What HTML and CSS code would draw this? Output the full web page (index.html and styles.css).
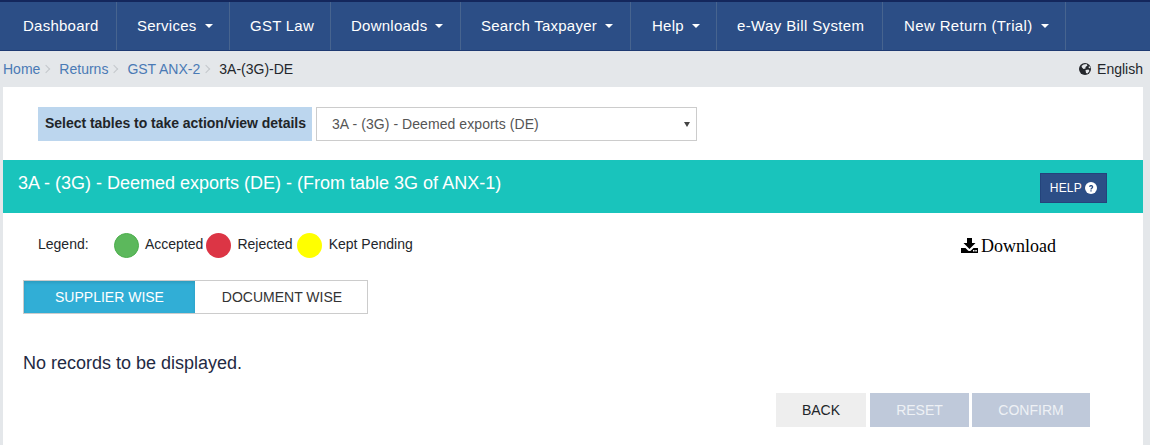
FILE: index.html
```html
<!DOCTYPE html>
<html lang="en">
<head>
<meta charset="utf-8">
<title>3A-(3G)-DE</title>
<link rel="stylesheet" href="styles.css">
</head>
<body>
<nav class="nav">
  <a class="nav-item w1">Dashboard</a>
  <a class="nav-item w2">Services<i class="caret"></i></a>
  <a class="nav-item w3">GST Law</a>
  <a class="nav-item w4">Downloads<i class="caret"></i></a>
  <a class="nav-item w5">Search Taxpayer<i class="caret"></i></a>
  <a class="nav-item w6">Help<i class="caret"></i></a>
  <a class="nav-item w7">e-Way Bill System</a>
  <a class="nav-item w8">New Return (Trial)<i class="caret"></i></a>
</nav>
<div class="crumbs">
  <div class="crumb-list">
    <a class="crumb">Home</a><span class="sep"></span>
    <a class="crumb">Returns</a><span class="sep"></span>
    <a class="crumb">GST ANX-2</a><span class="sep"></span>
    <span class="crumb-current">3A-(3G)-DE</span>
  </div>
  <div class="lang">
    <svg class="globe" viewBox="0 0 24 24" width="12" height="12"><circle cx="12" cy="12" r="12" fill="#23262b"/><path d="M9 3 L15 2 L17 5 L13 8 L13 11 L9 12 L6 9 L5 6 Z M13 14 L19 13 L21 16 L17 21 L14 20 Z M20 6 L23 9 L22 11 L19 9 Z" fill="#e4e7ea"/></svg>
    <span>English</span>
  </div>
</div>
<main class="main">
  <div class="picker">
    <label class="picker-label">Select tables to take action/view details</label>
    <div class="picker-select">
      <span>3A - (3G) - Deemed exports (DE)</span>
      <i class="select-arrow"></i>
    </div>
  </div>
  <div class="banner">
    <h1 class="banner-title">3A - (3G) - Deemed exports (DE) - (From table 3G of ANX-1)</h1>
    <button class="help-btn">HELP <svg class="help-icon" viewBox="0 0 24 24" width="12" height="12"><circle cx="12" cy="12" r="12" fill="#fff"/><path d="M8 9.5 C8 5 16.5 5 16.5 9.8 C16.5 13 13.3 12.6 13.3 15 L10.7 15 C10.7 11.2 13.7 11.6 13.7 9.8 C13.7 8 10.8 8 10.4 10.2 Z M10.7 16.5 H13.3 V19 H10.7 Z" fill="#2c4e86"/></svg></button>
  </div>
  <div class="legend-row">
    <div class="legend">
      <span class="legend-title">Legend:</span>
      <span class="dot dot-green"></span><span class="legend-text t1">Accepted</span>
      <span class="dot dot-red"></span><span class="legend-text t2">Rejected</span>
      <span class="dot dot-yellow"></span><span class="legend-text">Kept Pending</span>
    </div>
    <a class="download">
      <svg class="dl-icon" viewBox="0 0 17 15" width="17" height="15"><path d="M6 0 H11 V5 H14.5 L8.5 11 L2.5 5 H6 Z" fill="#000"/><path d="M0 10 H4.5 L7 12.5 Q8.5 13.6 10 12.5 L12.5 10 H17 V15 H0 Z" fill="#000"/><rect x="12" y="12" width="1.5" height="1.5" fill="#fff"/><rect x="14.3" y="12" width="1.5" height="1.5" fill="#fff"/></svg>
      <span class="dl-text">Download</span>
    </a>
  </div>
  <div class="tabs">
    <button class="tab tab-active">SUPPLIER WISE</button>
    <button class="tab tab-doc">DOCUMENT WISE</button>
  </div>
  <p class="empty">No records to be displayed.</p>
  <div class="actions">
    <button class="btn btn-back">BACK</button>
    <button class="btn btn-off b-reset">RESET</button>
    <button class="btn btn-off b-confirm">CONFIRM</button>
  </div>
</main>
</body>
</html>
```
FILE: styles.css
```css
* { box-sizing: border-box; }
html, body { margin: 0; padding: 0; }
body {
  width: 1150px;
  height: 445px;
  overflow: hidden;
  background: #e4e7ea;
  font-family: "Liberation Sans", Arial, sans-serif;
  color: #212529;
}
.nav {
  display: flex;
  height: 51px;
  background: #2c4e86;
  border-top: 2px solid #14275c;
  border-bottom: 1px solid #1e3a72;
}
.nav-item {
  display: flex;
  align-items: center;
  height: 48px;
  padding: 0 0 2px 20px;
  color: #fff;
  font-size: 15px;
  letter-spacing: 0.25px;
  border-right: 1px solid #47648f;
  white-space: pre;
}
.w1 { width: 117px; padding-left: 23px; }
.w2 { width: 113px; }
.w3 { width: 101px; }
.w4 { width: 130px; }
.w5 { width: 170px; }
.w6 { width: 86px; padding-left: 21px; }
.w7 { width: 166px; letter-spacing: 0.37px; }
.w8 { width: 183px; padding-left: 21px; letter-spacing: 0.37px; }
.caret {
  width: 0;
  height: 0;
  margin-left: 8px;
  margin-top: 2px;
  border-left: 4px solid transparent;
  border-right: 4px solid transparent;
  border-top: 4px solid #fff;
}
.crumbs {
  display: flex;
  justify-content: space-between;
  align-items: center;
  height: 36px;
  padding: 0 7px 1px 3px;
  font-size: 14px;
}
.crumb-list { display: flex; align-items: center; }
.crumb { color: #4a7ab5; }
.crumb-current { color: #23262b; }
.sep {
  width: 6px;
  height: 6px;
  margin: 0 10px 0 3px;
  border-top: 1px solid #c4c8cc;
  border-right: 1px solid #c4c8cc;
  transform: rotate(45deg);
}
.lang { display: flex; align-items: center; gap: 6px; color: #23262b; }
.globe { display: block; }
.main {
  width: 1140px;
  height: 358px;
  margin-left: 3px;
  background: #fff;
}
.picker {
  display: flex;
  padding: 20px 0 0 35px;
  gap: 4px;
}
.picker-label {
  width: 274px;
  height: 34px;
  padding-left: 7px;
  line-height: 32px;
  font-size: 14px;
  font-weight: 700;
  letter-spacing: -0.03px;
  background: #bcd6ee;
  color: #212529;
}
.picker-select {
  position: relative;
  width: 381px;
  height: 34px;
  padding-left: 15px;
  line-height: 33px;
  font-size: 14px;
  letter-spacing: 0.07px;
  color: #555;
  border: 1px solid #ccc;
  background: #fff;
}
.select-arrow {
  position: absolute;
  right: 6px;
  top: 14px;
  width: 0;
  height: 0;
  border-left: 3px solid transparent;
  border-right: 3px solid transparent;
  border-top: 5px solid #444;
}
.banner {
  display: flex;
  align-items: center;
  justify-content: space-between;
  height: 53px;
  margin-top: 19px;
  padding: 0 36px 0 15px;
  background: #19c4bc;
}
.banner-title {
  margin: 0 0 7px;
  font-size: 18px;
  font-weight: 400;
  color: #fff;
}
.help-btn {
  width: 67px;
  height: 30px;
  margin-top: 3px;
  padding: 0;
  font: 12px "Liberation Sans", Arial, sans-serif;
  letter-spacing: 0.2px;
  color: #fff;
  background: #2c4e86;
  border: 1px solid #24437b;
}
.help-icon { vertical-align: -2px; }
.legend-row {
  display: flex;
  justify-content: space-between;
  padding: 19px 87px 0 35px;
  height: 67px;
}
.legend { display: flex; align-items: center; height: 26px; font-size: 14px; color: #23262b; }
.legend-title { width: 76px; margin-top: -3px; }
.legend-text { margin-top: -2px; }
.dot {
  width: 25px;
  height: 25px;
  border-radius: 50%;
  margin-right: 6px;
}
.dot-green { background: #5cb85c; border: 1px solid #4cae4c; }
.dot-red { background: #dc3545; }
.dot-yellow { background: #ffff00; margin-right: 7px; }
.t1 { margin-right: 3px; }
.t2 { margin-right: 4px; }
.download {
  display: flex;
  align-items: center;
  gap: 3px;
  height: 26px;
  font-family: "Liberation Serif", "Times New Roman", serif;
  font-size: 18px;
  color: #000;
}
.dl-text { margin-top: 2px; }
.tabs { display: flex; margin-left: 20px; width: 345px; height: 34px; border: 1px solid #ccc; }
.tab {
  padding: 0;
  border: 0;
  width: 172px;
  background: #fff;
  font: 14px "Liberation Sans", Arial, sans-serif;
  color: #333;
}
.tab-doc { padding-left: 2px; }
.tab-active { width: 171px; background: #31aed6; color: #fff; box-shadow: inset 0 2px 3px rgba(0,0,0,.1); }
.empty {
  margin: 38px 0 0 20px;
  font-size: 18px;
  line-height: 22px;
  color: #1f2a44;
}
.actions {
  display: flex;
  justify-content: flex-end;
  gap: 3px;
  padding-right: 53px;
  margin-top: 19px;
}
.btn {
  height: 34px;
  padding: 0;
  border: 0;
  font: 14px "Liberation Sans", Arial, sans-serif;
}
.btn-back { width: 90px; margin-right: 1px; background: #eee; color: #212529; }
.btn-off { color: #eef1f5; background: #bfc9da; }
.b-reset { width: 99px; }
.b-confirm { width: 118px; }
```
